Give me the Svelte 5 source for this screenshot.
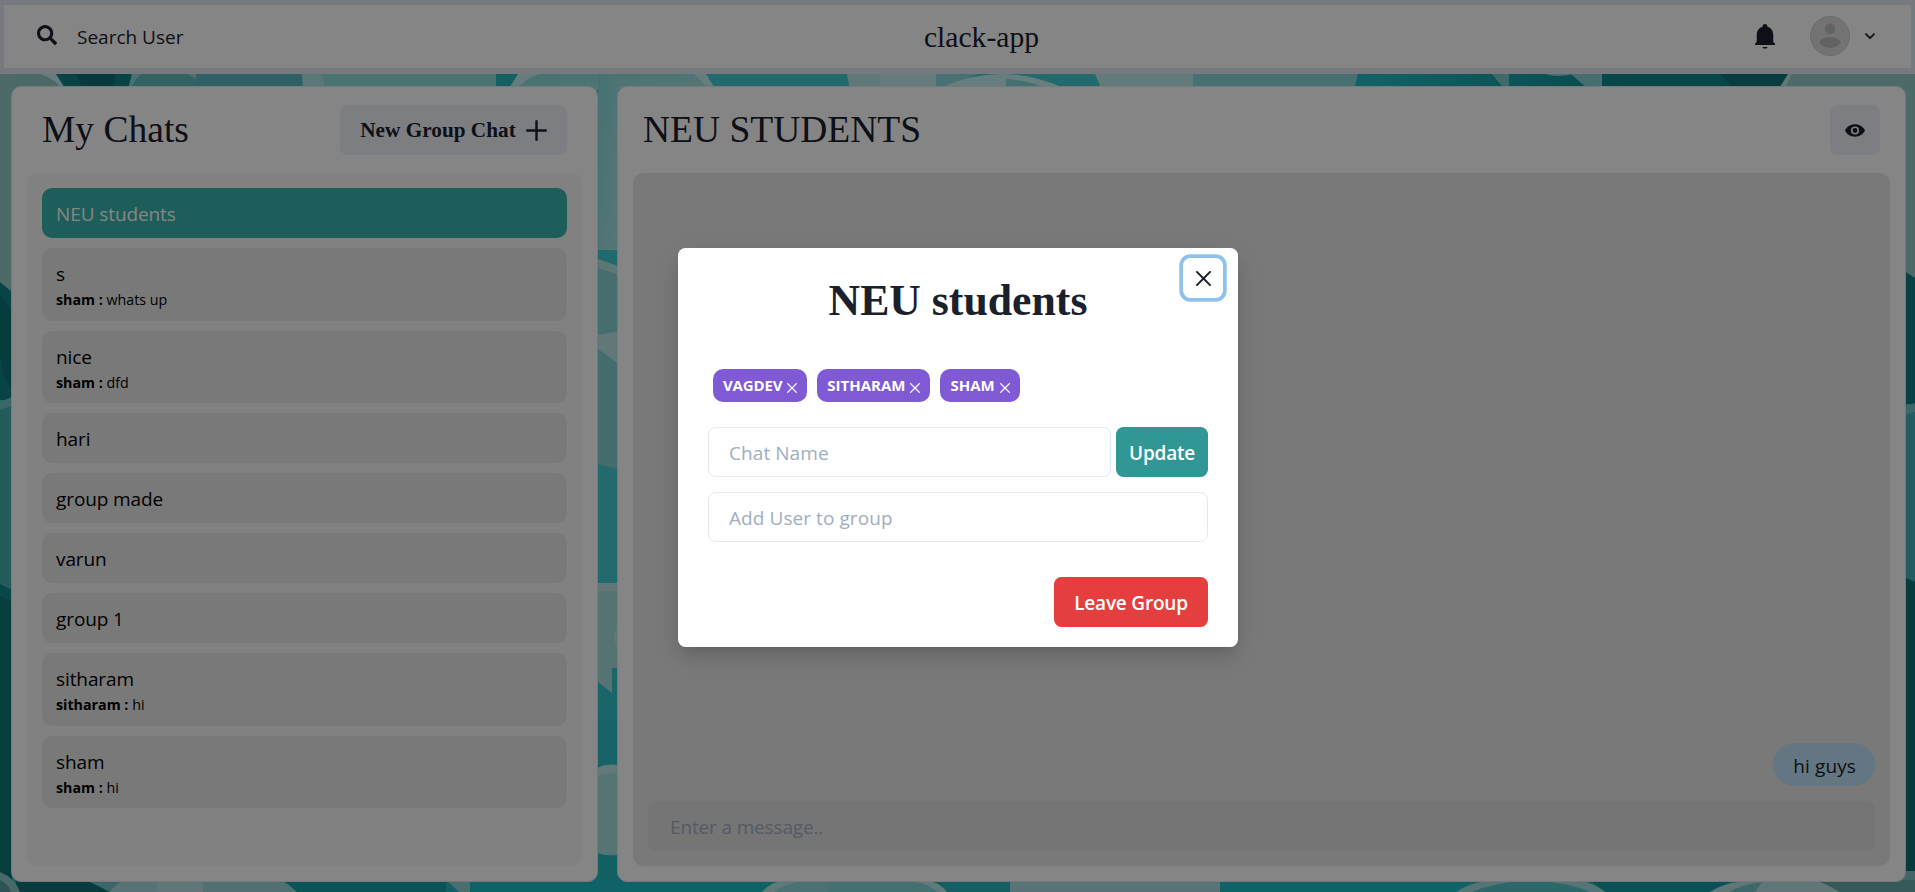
<script>
  const chats = [
    { name: 'NEU students', active: true },
    { name: 's', sender: 'sham', text: 'whats up' },
    { name: 'nice', sender: 'sham', text: 'dfd' },
    { name: 'hari' },
    { name: 'group made' },
    { name: 'varun' },
    { name: 'group 1' },
    { name: 'sitharam', sender: 'sitharam', text: 'hi' },
    { name: 'sham', sender: 'sham', text: 'hi' }
  ];
  const members = ['VAGDEV', 'SITHARAM', 'SHAM'];
</script>

{#snippet cross(size)}
  <svg width={size} height={size} viewBox="0 0 24 24" fill="currentColor">
    <path d="M.439 21.44a1.5 1.5 0 0 0 2.122 2.121l9.262-9.261a.25.25 0 0 1 .354 0l9.262 9.263a1.5 1.5 0 1 0 2.122-2.121L14.3 12.177a.25.25 0 0 1 0-.354l9.263-9.262A1.5 1.5 0 0 0 21.439.44L12.177 9.7a.25.25 0 0 1-.354 0L2.561.44A1.5 1.5 0 0 0 .439 2.561L9.7 11.823a.25.25 0 0 1 0 .354Z" />
  </svg>
{/snippet}

<div class="app">
  <svg class="wallpaper" viewBox="0 0 1915 892" preserveAspectRatio="none" aria-hidden="true">
    <defs>
      <linearGradient id="sea" x1="0" y1="0" x2="0" y2="1">
        <stop offset="0" stop-color="#42ccd3" />
        <stop offset=".65" stop-color="#41cbd2" />
        <stop offset=".8" stop-color="#30c0c7" />
        <stop offset="1" stop-color="#24b8be" />
      </linearGradient>
      <linearGradient id="haze" x1="0" y1="0" x2="1" y2="1">
        <stop offset="0" stop-color="#85d8dc" />
        <stop offset="1" stop-color="#a8e4e4" />
      </linearGradient>
      <linearGradient id="deep" x1="0" y1="0" x2="1" y2="0">
        <stop offset="0" stop-color="#22bec7" />
        <stop offset="1" stop-color="#129096" />
      </linearGradient>
    </defs>
    <rect width="1915" height="892" fill="url(#sea)" />

    <!-- top band -->
    <rect x="0" y="70" width="64" height="20" fill="#91cac6" />
    <path d="M40 74H56L66 88H61Q54 78 40 74Z" fill="#c6f0ef" />
    <path d="M56 74H132L128 90H66Z" fill="#118387" />
    <path d="M75 74H116L112 90H84Z" fill="#0f7075" />
    <path d="M132 74H302V90H128Z" fill="#62bcc1" />
    <path d="M132 74H141Q133 81 131 90H128Z" fill="#8fd8da" />
    <path d="M188 74H196V79Z" fill="#9ed9dc" />
    <path d="M196 74H302V90H196Z" fill="#59b9c1" />
    <path d="M302 74H322L327 90H303Z" fill="#aee6e7" />
    <path d="M322 74H496V90H327Z" fill="#91dcdf" />
    <path d="M496 74H520L507 90H496Z" fill="#25b6bd" />
    <path d="M518 74H706L716 90H508Z" fill="#c4f0f0" />
    <path d="M540 74H694L710 90H516Q525 78 540 74Z" fill="url(#haze)" />
    <path d="M847 74H936V90H850Z" fill="#b6e6e7" />
    <path d="M880 74H936V90H880Z" fill="#c3eeef" />
    <path d="M936 74H980Q956 80 942 90H936Z" fill="#8bd8dc" />
    <path d="M940 88Q1000 60 1064 88Z" fill="#c3f1f1" />
    <path d="M1006 88V79Q1030 81 1045 88Z" fill="#83d6d9" />
    <path d="M1095 74H1193V90H1102Z" fill="#bdebeb" />
    <path d="M1193 74H1358L1354 90H1193Z" fill="#88d6db" />
    <path d="M1358 74H1602V90H1354Z" fill="url(#deep)" />
    <path d="M1492 74H1509V90H1505Z" fill="#79c9ce" />
    <path d="M1545 74H1574Q1557 78 1545 74Z" fill="#88d5d8" />
    <path d="M1571 74H1602V90H1589Z" fill="#86d1d5" />
    <path d="M1602 74H1790L1778 90H1602Z" fill="#11898d" />
    <path d="M1720 74H1790L1778 90H1735Z" fill="#10767a" />
    <path d="M1788 74H1802L1786 90H1778Z" fill="#bce5e5" />
    <path d="M1792 74H1915V284L1906 278L1870 90H1784Z" fill="#94cbc9" />

    <!-- gutter between the two panels -->
    <path d="M598 74H618V250H598Z" fill="url(#haze)" />
    <path d="M598 250H608L618 256V266L598 260Z" fill="#3fcbd1" />
    <path d="M598 259L618 266V275L598 268Z" fill="#b2e4e5" />
    <path d="M598 268L618 275V331L598 335Z" fill="#8bd1d5" />
    <path d="M598 335L618 331V364L598 349Z" fill="#b8e6e8" />
    <path d="M598 349L618 364V469L598 464Z" fill="#86d1d4" />
    <rect x="598" y="583" width="20" height="9" fill="#bce7e7" />
    <path d="M598 591H618V668H612V693L598 682Z" fill="#a5dddf" />
    <path d="M618 622Q611 639 618 650Z" fill="#bce7e7" />
    <path d="M598 768Q604 764 618 765V855Q604 856 598 853Z" fill="#a8dedf" />
    <path d="M598 768Q604 764 618 765V773Q604 773 598 776Z" fill="#bfe9e9" />

    <!-- left edge -->
    <path d="M0 74H12V292L0 282Z" fill="#94cbc9" />
    <path d="M0 282L12 292V400H0Z" fill="#118386" />
    <path d="M0 295Q9 302 12 315V390Q-2 370 0 340Z" fill="#0e7477" />
    <path d="M0 402L12 397V406L0 410Z" fill="#72c6c6" />
    <path d="M0 410L12 406V590L0 584Z" fill="#45aeb1" />
    <path d="M0 584L12 590V892H0Z" fill="#0e7578" />
    <path d="M0 585L12 590V602L0 596Z" fill="#12898b" />

    <!-- right edge -->
    <path d="M1904 271L1915 278V404H1904Z" fill="#0e7d80" />
    <path d="M1904 407L1915 403V412L1904 415Z" fill="#72c6c6" />
    <path d="M1904 415L1915 412V582L1904 577Z" fill="#45b3b8" />
    <path d="M1904 577L1915 582V872H1904Z" fill="#0e7376" />
    <rect x="1896" y="871" width="19" height="9" fill="#7fc3c3" />
    <rect x="1880" y="880" width="35" height="12" fill="#66a9ab" />

    <!-- bottom band -->
    <path d="M16 880H100L122 892H16Z" fill="#0e7175" />
    <path d="M86 880H162L110 892Z" fill="#76c4c8" />
    <path d="M122 880H157V892H109Z" fill="#a9dcdd" />
    <rect x="157" y="880" width="46" height="12" fill="#bbe3e3" />
    <path d="M203 880H280Q290 885 297 892H203Z" fill="#9bd7da" />
    <path d="M284 880H446V892H297Z" fill="#15a1a7" />
    <path d="M446 880H470V892H459Z" fill="#8ad3d5" />
    <path d="M470 880H780L764 892H470Z" fill="#1dbcc3" />
    <path d="M762 892Q772 880 790 880H925Q940 882 947 892Z" fill="#b9e9e9" />
    <path d="M774 892Q784 884 804 880H828V892Z" fill="#93d8db" />
    <path d="M828 880H905Q928 883 938 892H828Z" fill="#85d6d9" />
    <path d="M1010 880H1220V892H1010Z" fill="#a9dfe0" />
    <path d="M1220 880H1480L1456 892H1220Z" fill="#1dbcc3" />
    <path d="M1456 892Q1474 880 1500 880H1580Q1595 884 1606 892Z" fill="#a8dfdf" />
    <path d="M1472 892Q1500 880 1540 881Q1574 884 1589 892Z" fill="#55c8cc" />
    <path d="M1588 880H1735L1710 892H1606Z" fill="#129ca1" />
    <path d="M1710 892Q1725 881 1760 880H1812Q1830 884 1840 892Z" fill="#bae3e3" />
    <path d="M1729 892Q1740 885 1762 882L1755 892Z" fill="#74c8ca" />
    <path d="M1818 880H1915V892H1840Z" fill="#66a9ab" />
    <path d="M0 872Q15 878 20 892H0Z" fill="#8fcaca" />
    <path d="M0 880Q8 883 11 892H0Z" fill="#5ba0a2" />
  </svg>

  <header class="topbar">
    <div class="search">
      <svg width="20" height="20" viewBox="0 0 512 512" fill="currentColor">
        <path d="M505 442.7L405.3 343c-4.5-4.500-10.600-7-17-7H372c27.600-35.300 44-79.700 44-128C416 93.100 322.900 0 208 0S0 93.100 0 208s93.100 208 208 208c48.300 0 92.700-16.400 128-44v16.300c0 6.400 2.500 12.500 7 17l99.700 99.700c9.400 9.400 24.600 9.400 33.900 0l28.300-28.300c9.400-9.400 9.400-24.600.1-34zM208 336c-70.700 0-128-57.200-128-128 0-70.700 57.200-128 128-128 70.700 0 128 57.200 128 128 0 70.700-57.200 128-128 128z" />
      </svg>
      <span>Search User</span>
    </div>
    <div class="brand">clack-app</div>
    <div class="account">
      <svg class="bell" width="30" height="30" viewBox="0 0 24 24" fill="currentColor">
        <path d="M12 22c1.100 0 2-.4 2-1.300h-4c0 .9.890 1.300 2 1.300zm6.600-5.500V11c0-3.200-1.700-5.800-4.700-6.500v-.6C13.900 3 13 2.300 12 2.300s-1.900.7-1.900 1.600v.6C7.100 5.200 5.400 7.800 5.400 11v5.500L4 18.200v1h16v-1z" />
      </svg>
      <svg class="avatar" width="40" height="40" viewBox="0 0 40 40">
        <circle cx="20" cy="20" r="19.600" fill="#dcdcdc" stroke="#b7d5b5" stroke-width=".8" />
        <circle cx="20" cy="12.800" r="5.200" fill="#bdbdbd" />
        <path d="M9 25.800C11.500 22.600 15.600 21 20 21s8.500 1.600 11 4.800C29 29.800 24.800 32 20 32S11 29.800 9 25.800Z" fill="#bdbdbd" />
      </svg>
      <svg width="10" height="7" viewBox="0 0 10 7" fill="none" stroke="currentColor" stroke-width="1.800" stroke-linecap="round" stroke-linejoin="round">
        <path d="M1 1.200L5 5.200L9 1.200" />
      </svg>
    </div>
  </header>

  <main class="columns">
    <section class="panel chats">
      <div class="panel-head">
        <h1>My Chats</h1>
        <button class="new-group">
          New Group Chat
          <svg width="21" height="21" viewBox="0 0 21 21" fill="none" stroke="currentColor" stroke-width="2.400" stroke-linecap="round">
            <path d="M10.500 1.200V19.800M1.200 10.500H19.800" />
          </svg>
        </button>
      </div>
      <div class="list">
        {#each chats as chat}
          <div class="chat" class:active={chat.active}>
            <div class="name">{chat.name}</div>
            {#if chat.sender}
              <div class="latest"><b>{chat.sender} :</b>{' ' + chat.text}</div>
            {/if}
          </div>
        {/each}
      </div>
    </section>

    <section class="panel room">
      <div class="panel-head">
        <h1>NEU STUDENTS</h1>
        <button class="view" aria-label="View group">
          <svg width="20" height="13" viewBox="0 0 20 13" fill="currentColor" fill-rule="evenodd">
            <path d="M10 .3C5.600.3 1.700 2.700 0 6.500c1.700 3.800 5.600 6.200 10 6.200s8.300-2.400 10-6.200C18.300 2.700 14.400.3 10 .3Zm0 10.300a4.100 4.100 0 1 1 0-8.200 4.100 4.100 0 0 1 0 8.200Z" />
            <circle cx="10" cy="6.500" r="2.400" />
          </svg>
        </button>
      </div>
      <div class="conversation">
        <div class="bubble">hi guys</div>
        <div class="composer">Enter a message..</div>
      </div>
    </section>
  </main>

  <div class="overlay">
    <div class="modal" role="dialog">
      <button class="close" aria-label="Close">{@render cross(15)}</button>
      <h2>NEU students</h2>
      <div class="tags">
        {#each members as member}
          <span class="tag"><span>{member}</span>{@render cross(10)}</span>
        {/each}
      </div>
      <div class="rename">
        <div class="field">Chat Name</div>
        <button class="update">Update</button>
      </div>
      <div class="field">Add User to group</div>
      <div class="footer">
        <button class="leave">Leave Group</button>
      </div>
    </div>
  </div>
</div>

<style>
  :global(body) {
    margin: 0;
    overflow: hidden;
  }
  .app,
  .app * {
    box-sizing: border-box;
  }
  .app {
    position: relative;
    width: 1915px;
    height: 892px;
    overflow: hidden;
    display: flex;
    flex-direction: column;
    font: 19px/30px 'Open Sans', 'Noto Sans', sans-serif;
    color: #1a202c;
  }
  svg {
    display: block;
    flex: none;
  }
  button {
    border: 0;
    padding: 0;
    margin: 0;
    color: inherit;
    border-radius: 7.5px;
    font: 600 19px/30px 'Open Sans', 'Noto Sans', sans-serif;
  }
  h1,
  h2 {
    margin: 0;
    font-family: 'Liberation Serif', 'Times New Roman', serif;
  }
  .wallpaper {
    position: absolute;
    inset: 0;
    width: 100%;
    height: 100%;
  }
  .topbar {
    position: relative;
    height: 74px;
    border: solid #e2e8f0;
    border-width: 5px 4px 6px;
    background: #fff;
    display: flex;
    align-items: center;
    justify-content: space-between;
    padding: 0 36px 1px 33px;
  }
  .search {
    display: flex;
    align-items: center;
    gap: 20px;
    width: 162px;
    font-weight: 500;
  }
  .search svg {
    margin-bottom: 2px;
  }
  .search span {
    padding-top: 1px;
  }
  .brand {
    margin-left: 14px;
    padding-top: 1px;
    font: 29.600px/36px 'Liberation Serif', 'Times New Roman', serif;
  }
  .account {
    display: flex;
    align-items: center;
  }
  .avatar {
    margin: 0 15px 0 30px;
  }
  .columns {
    position: relative;
    flex: 1;
    display: flex;
    gap: 19px;
    padding: 12px 9px 10px 11px;
  }
  .panel {
    display: flex;
    flex-direction: column;
    background: #fff;
    border: 1px solid #e2e8f0;
    border-radius: 10px;
    padding: 0 15px 15px;
  }
  .chats {
    width: 587px;
  }
  .room {
    flex: 1;
  }
  .panel-head {
    height: 86px;
    flex: none;
    display: flex;
    align-items: center;
    justify-content: space-between;
    padding: 0 15px;
  }
  .room .panel-head {
    padding: 0 10px;
  }
  h1 {
    font-size: 37.5px;
    line-height: 56px;
    font-weight: 400;
  }
  .new-group {
    height: 50px;
    width: 227px;
    display: flex;
    align-items: center;
    justify-content: center;
    gap: 10px;
    background: #edf2f7;
    font: bold 21.25px/25px 'Liberation Serif', 'Times New Roman', serif;
  }
  .view {
    width: 50px;
    height: 50px;
    display: grid;
    place-items: center;
    background: #edf2f7;
  }
  .list {
    flex: 1;
    display: flex;
    flex-direction: column;
    gap: 10px;
    padding: 15px;
    background: #f8f8f8;
    border-radius: 10px;
  }
  .chat {
    padding: 10px 14px;
    border-radius: 10px;
    background: #e8e8e8;
    color: #000;
  }
  .chat.active {
    background: #38b2ac;
    color: #fff;
  }
  .name {
    position: relative;
    top: 1px;
    letter-spacing: -0.1px;
  }
  .latest {
    position: relative;
    top: 1px;
    font-size: 14.25px;
    line-height: 22.5px;
  }
  .conversation {
    flex: 1;
    display: flex;
    flex-direction: column;
    justify-content: flex-end;
    align-items: flex-end;
    padding: 15px;
    background: #e8e8e8;
    border-radius: 10px;
  }
  .bubble {
    padding: 8px 19px 5px 20px;
    border-radius: 25px;
    background: #bee3f8;
    margin-bottom: 15px;
    letter-spacing: 0.1px;
  }
  .composer {
    align-self: stretch;
    height: 50px;
    padding: 11px 22px 9px;
    border-radius: 7.5px;
    background: #e0e0e0;
    color: #a0aec0;
    letter-spacing: -0.15px;
  }
  .overlay {
    position: absolute;
    inset: 0;
    display: flex;
    justify-content: center;
    align-items: flex-start;
    padding: 248px 0 0 1px;
    background: rgba(0, 0, 0, 0.48);
  }
  .modal {
    position: relative;
    width: 560px;
    height: 399px;
    padding: 20px 30px;
    border-radius: 7.5px;
    background: #fff;
    box-shadow:
      0 12px 19px -4px rgba(0, 0, 0, 0.1),
      0 5px 8px -2px rgba(0, 0, 0, 0.05),
      0 8px 30px rgba(0, 0, 0, 0.08);
    display: flex;
    flex-direction: column;
  }
  .close {
    position: absolute;
    top: 10px;
    right: 15px;
    width: 40px;
    height: 40px;
    display: grid;
    place-items: center;
    background: #fff;
    box-shadow: 0 0 0 3.75px rgba(66, 153, 225, 0.6);
  }
  h2 {
    font-size: 43.75px;
    line-height: 65px;
    font-weight: 700;
    text-align: center;
  }
  .tags {
    display: flex;
    gap: 10px;
    padding: 36px 5px 25px;
  }
  .tag {
    display: flex;
    align-items: center;
    gap: 5px;
    height: 33px;
    padding: 0 10px;
    border-radius: 10px;
    background: #805ad5;
    color: #fff;
    font-size: 15px;
    font-weight: 700;
  }
  .tag span {
    margin-bottom: 2px;
  }
  .tag:first-child span {
    letter-spacing: -0.15px;
  }
  .tag svg {
    margin-top: 4px;
  }
  .rename {
    display: flex;
    gap: 5px;
    margin-bottom: 15px;
  }
  .rename .field {
    flex: 1;
  }
  .field {
    height: 50px;
    padding: 10px 20px;
    border: 1px solid #e2e8f0;
    border-radius: 7.5px;
    color: #a0aec0;
    letter-spacing: 0.07px;
  }
  .update,
  .leave {
    height: 50px;
    padding-top: 2px;
    color: #fff;
    letter-spacing: -0.2px;
  }
  .update {
    width: 92px;
    background: #319795;
  }
  .footer {
    margin-top: 35px;
    display: flex;
    justify-content: flex-end;
  }
  .leave {
    width: 154px;
    background: #e53e3e;
  }
</style>
